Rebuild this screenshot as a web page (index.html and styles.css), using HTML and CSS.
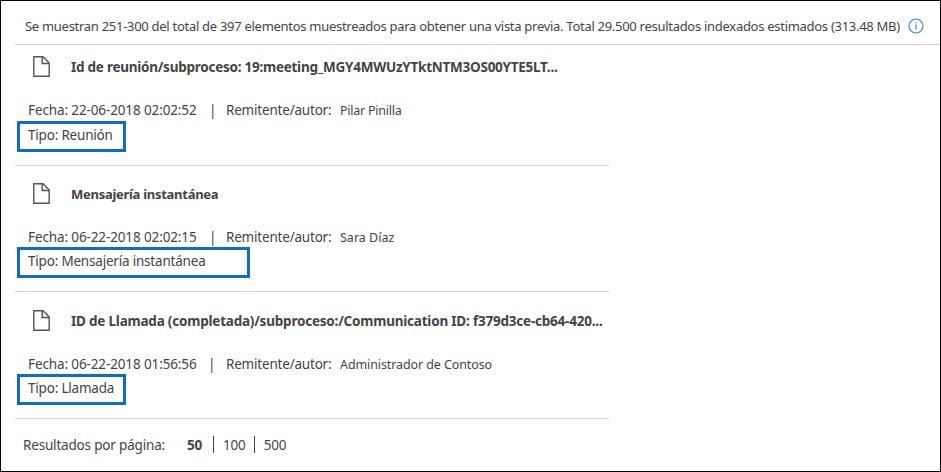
FILE: index.html
```html
<!DOCTYPE html>
<html lang="es">
<head>
<meta charset="utf-8">
<title>Vista previa de resultados</title>
<link rel="stylesheet" href="styles.css">
</head>
<body>
<main class="panel">
  <header class="summary">
    <span class="summary-text">Se muestran 251-300 del total de 397 elementos muestreados para obtener una vista previa. Total 29.500 resultados indexados estimados (313.48 MB)</span>
    <svg class="info" viewBox="0 0 16 16" width="16" height="16"><circle cx="8" cy="8" r="7" fill="none" stroke="#2b83dc" stroke-width="1.1"/><path d="M8 6.5v5M8 4v1.3" stroke="#2b83dc" stroke-width="1.2" fill="none"/></svg>
  </header>
  <section class="results">
    <article class="item item-first">
      <div class="heading"><svg class="doc" viewBox="0 0 17 21" width="17" height="21"><path d="M.8.8h9.2l6.2 6.2v13.2H.8zM9.2.8v6.7h7" fill="none" stroke="#555" stroke-width="1.4"/></svg><h2 class="title title-meeting">Id de reunión/subproceso: 19:meeting_MGY4MWUzYTktNTM3OS00YTE5LT...</h2></div>
      <div class="meta"><span class="date">Fecha: 22-06-2018 02:02:52</span><span class="bar">|</span><span class="label">Remitente/autor:</span><span class="author author-pilar">Pilar Pinilla</span></div>
      <div class="type"><span class="type-meeting">Tipo: Reunión</span></div>
    </article>
    <article class="item">
      <div class="heading"><svg class="doc" viewBox="0 0 17 21" width="17" height="21"><path d="M.8.8h9.2l6.2 6.2v13.2H.8zM9.2.8v6.7h7" fill="none" stroke="#555" stroke-width="1.4"/></svg><h2 class="title title-im">Mensajería instantánea</h2></div>
      <div class="meta"><span class="date">Fecha: 06-22-2018 02:02:15</span><span class="bar">|</span><span class="label">Remitente/autor:</span><span class="author author-sara">Sara Díaz</span></div>
      <div class="type type-wide"><span class="type-im">Tipo: Mensajería instantánea</span></div>
    </article>
    <article class="item item-last">
      <div class="heading"><svg class="doc" viewBox="0 0 17 21" width="17" height="21"><path d="M.8.8h9.2l6.2 6.2v13.2H.8zM9.2.8v6.7h7" fill="none" stroke="#555" stroke-width="1.4"/></svg><h2 class="title title-call">ID de Llamada (completada)/subproceso:/Communication ID: f379d3ce-cb64-420...</h2></div>
      <div class="meta"><span class="date">Fecha: 06-22-2018 01:56:56</span><span class="bar">|</span><span class="label">Remitente/autor:</span><span class="author author-admin">Administrador de Contoso</span></div>
      <div class="type"><span class="type-call">Tipo: Llamada</span></div>
    </article>
  </section>
  <footer class="pager">
    <span class="pager-label">Resultados por página:</span>
    <span class="size size-active">50</span>
    <span class="size">100</span>
    <span class="size">500</span>
  </footer>
</main>
</body>
</html>
```
FILE: styles.css
```css
* { box-sizing: border-box; }
body { margin: 0; background: #fff; color: #444; font: 13.5px/20px "Noto Sans", "Open Sans", sans-serif; white-space: nowrap; }
.panel { width: 941px; height: 472px; border: 1px solid #000; padding-left: 14px; overflow: hidden; }
.summary { display: flex; align-items: center; height: 44px; padding: 7px 0 0 10px; border-bottom: 1px solid #d0d0d0; }
.summary-text { width: 883px; font-size: 13px; letter-spacing: -0.285px; }
.summary .info { flex: none; }
.results { width: 594px; }
.item { padding: 17px 0 13px; border-bottom: 1px solid #d0d0d0; }
.item-first { padding-top: 11px; }
.item-last { padding-top: 18px; }
.heading { display: flex; align-items: center; height: 21px; padding-left: 18px; }
.doc { flex: none; margin-right: 21px; }
.title { margin: 0; font-size: 13.5px; line-height: 20px; font-weight: 700; }
.title-meeting { letter-spacing: -0.25px; }
.title-im { font-size: 13px; letter-spacing: -0.28px; }
.title-call { letter-spacing: -0.21px; }
.meta { display: flex; height: 43px; padding: 23px 0 0 13px; }
.item-first .meta { height: 44px; }
.date { width: 181px; letter-spacing: -0.12px; }
.bar { width: 17px; }
.item-last .date { width: 180px; }
.item-last .bar { width: 18px; }
.label { width: 114px; letter-spacing: -0.2px; }
.author { padding-top: 1px; font-size: 12.5px; }
.author-pilar { letter-spacing: -0.25px; }
.author-admin { letter-spacing: -0.1px; }
.type { width: 109px; height: 31px; margin-left: 2px; padding: 1px 0 0 8px; border: 3px solid #106ebe; letter-spacing: -0.2px; }
.type-wide { width: 233px; }
.pager { display: flex; align-items: center; height: 51px; padding-left: 8px; }
.pager-label { width: 155px; letter-spacing: -0.18px; }
.size { height: 17px; line-height: 18px; padding: 0 8px 0 9px; border-left: 1px solid #444; letter-spacing: -0.2px; }
.size-active { padding-right: 11px; border-left: 0; font-weight: 700; }
```
